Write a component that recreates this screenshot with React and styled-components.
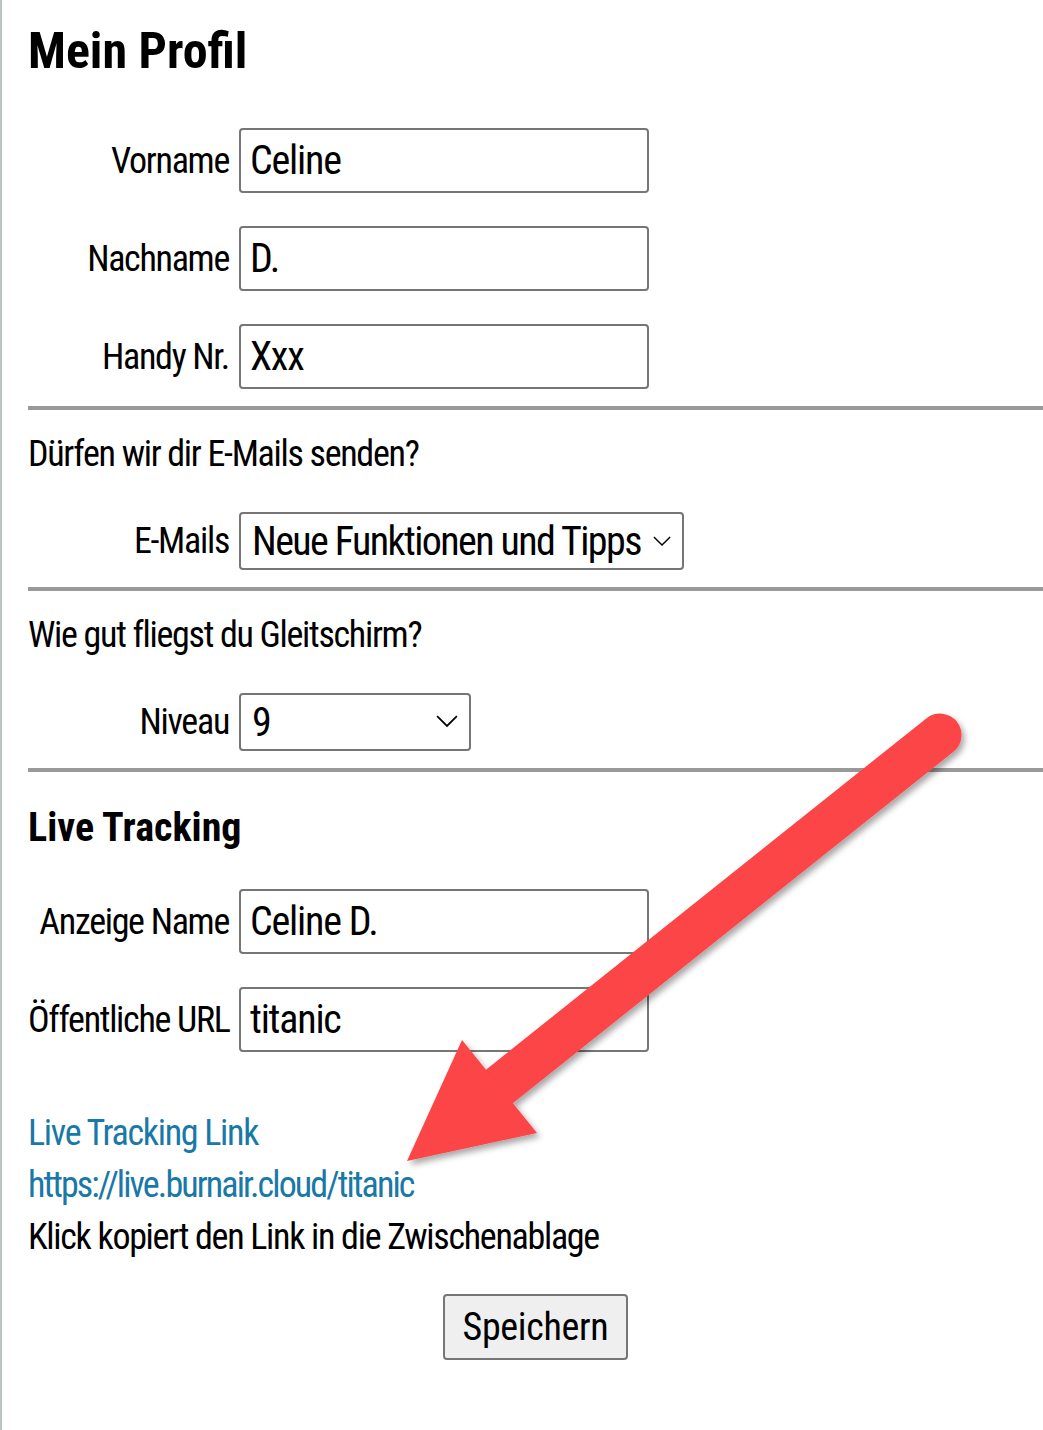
import { styled, createGlobalStyle } from "styled-components";

const GlobalStyle = createGlobalStyle`
  html, body {
    margin: 0;
    padding: 0;
    background: #fff;
  }
  body {
    font-family: "Roboto Condensed", "Liberation Sans Narrow", "DejaVu Sans Condensed", "Liberation Sans", sans-serif;
    font-stretch: condensed;
    color: #000;
  }
`;

const Page = styled.div`
  position: relative;
  width: 1043px;
  height: 1430px;
  box-sizing: border-box;
  border-left: 2px solid #b9c5c4;
  padding: 19px 0 0 26px;
  overflow: hidden;
`;

const Title = styled.h1`
  margin: 0 0 45px;
  font-size: 50px;
  line-height: 64px;
  font-weight: 700;
`;

const SubTitle = styled.h2`
  margin: 30px 0 35px;
  font-size: 40px;
  line-height: 52px;
  font-weight: 700;
`;

const Field = styled.div`
  display: flex;
  align-items: center;
  margin-bottom: ${(p) => p.$gap ?? 33}px;
`;

const Label = styled.label`
  width: 201px;
  margin-right: 10px;
  text-align: right;
  font-size: 36px;
  line-height: 44px;
  letter-spacing: -1.3px;
  white-space: nowrap;
`;

const Input = styled.div`
  box-sizing: border-box;
  width: 410px;
  height: 65px;
  border: 2px solid #767676;
  border-radius: 4px;
  padding: 0 9px;
  display: flex;
  align-items: center;
  font-size: 40px;
  letter-spacing: -1.2px;
`;

const Select = styled.div`
  box-sizing: border-box;
  width: ${(p) => p.$width}px;
  height: 58px;
  border: 2px solid #767676;
  border-radius: 4px;
  padding: 0 11px;
  display: flex;
  align-items: center;
  justify-content: space-between;
  font-size: 40px;
  letter-spacing: -1.6px;
  white-space: nowrap;
  svg {
    flex-shrink: 0;
  }
`;

const Rule = styled.hr`
  margin: 17px 0 0;
  border: none;
  height: 4px;
  background: #999;
`;

const Question = styled.p`
  margin: 22px 0 36px;
  font-size: 36px;
  line-height: 44px;
  letter-spacing: -1.3px;
`;

const LinkText = styled.p`
  margin: 0;
  font-size: 36px;
  line-height: 52px;
  letter-spacing: ${(p) => (p.$tight ? -1.9 : -1.3)}px;
  color: ${(p) => (p.$blue ? "#1878a8" : "#000")};
`;

const LinkBlock = styled.div`
  margin-top: 55px;
`;

const ButtonRow = styled.div`
  display: flex;
  justify-content: center;
  margin-top: 31px;
`;

const Button = styled.button`
  box-sizing: border-box;
  width: 185px;
  height: 66px;
  background: #efefef;
  border: 2px solid #767676;
  border-radius: 4px;
  font-family: inherit;
  font-size: 38px;
  letter-spacing: -0.3px;
  color: #000;
`;

const Overlay = styled.svg`
  position: absolute;
  left: 0;
  top: 0;
  pointer-events: none;
`;

const Chevron = ({ size }) => (
  <svg width={size} height={size * 0.6} viewBox="0 0 20 12">
    <polyline points="1,1 10,10 19,1" fill="none" stroke="#000" strokeWidth="1.6" />
  </svg>
);

const Arrow = () => (
  <Overlay width="1043" height="1430" viewBox="0 0 1043 1430">
    <defs>
      <filter id="shadow" x="-20%" y="-20%" width="140%" height="140%">
        <feDropShadow dx="3" dy="4" stdDeviation="3" floodColor="#000" floodOpacity="0.35" />
      </filter>
    </defs>
    <g filter="url(#shadow)" fill="#fc4446">
      <line x1="938" y1="735" x2="498" y2="1086" stroke="#fc4446" strokeWidth="43" strokeLinecap="round" />
      <polygon points="460,1040 405,1161 535,1133" />
    </g>
  </Overlay>
);

const App = () => {
  return (
    <>
      <GlobalStyle />
      <Page>
        <Title>Mein Profil</Title>
        <Field>
          <Label>Vorname</Label>
          <Input>Celine</Input>
        </Field>
        <Field>
          <Label>Nachname</Label>
          <Input>D.</Input>
        </Field>
        <Field $gap={0}>
          <Label>Handy Nr.</Label>
          <Input>Xxx</Input>
        </Field>
        <Rule />
        <Question>Dürfen wir dir E-Mails senden?</Question>
        <Field $gap={0}>
          <Label>E-Mails</Label>
          <Select $width={445}>
            Neue Funktionen und Tipps
            <Chevron size={18} />
          </Select>
        </Field>
        <Rule />
        <Question>Wie gut fliegst du Gleitschirm?</Question>
        <Field $gap={0}>
          <Label>Niveau</Label>
          <Select $width={232}>
            9
            <Chevron size={22} />
          </Select>
        </Field>
        <Rule />
        <SubTitle>Live Tracking</SubTitle>
        <Field>
          <Label>Anzeige Name</Label>
          <Input>Celine D.</Input>
        </Field>
        <Field $gap={0}>
          <Label>Öffentliche URL</Label>
          <Input>titanic</Input>
        </Field>
        <LinkBlock>
          <LinkText $blue>Live Tracking Link</LinkText>
          <LinkText $blue $tight>https://live.burnair.cloud/titanic</LinkText>
          <LinkText>Klick kopiert den Link in die Zwischenablage</LinkText>
        </LinkBlock>
        <ButtonRow>
          <Button>Speichern</Button>
        </ButtonRow>
        <Arrow />
      </Page>
    </>
  );
};

export default App;
